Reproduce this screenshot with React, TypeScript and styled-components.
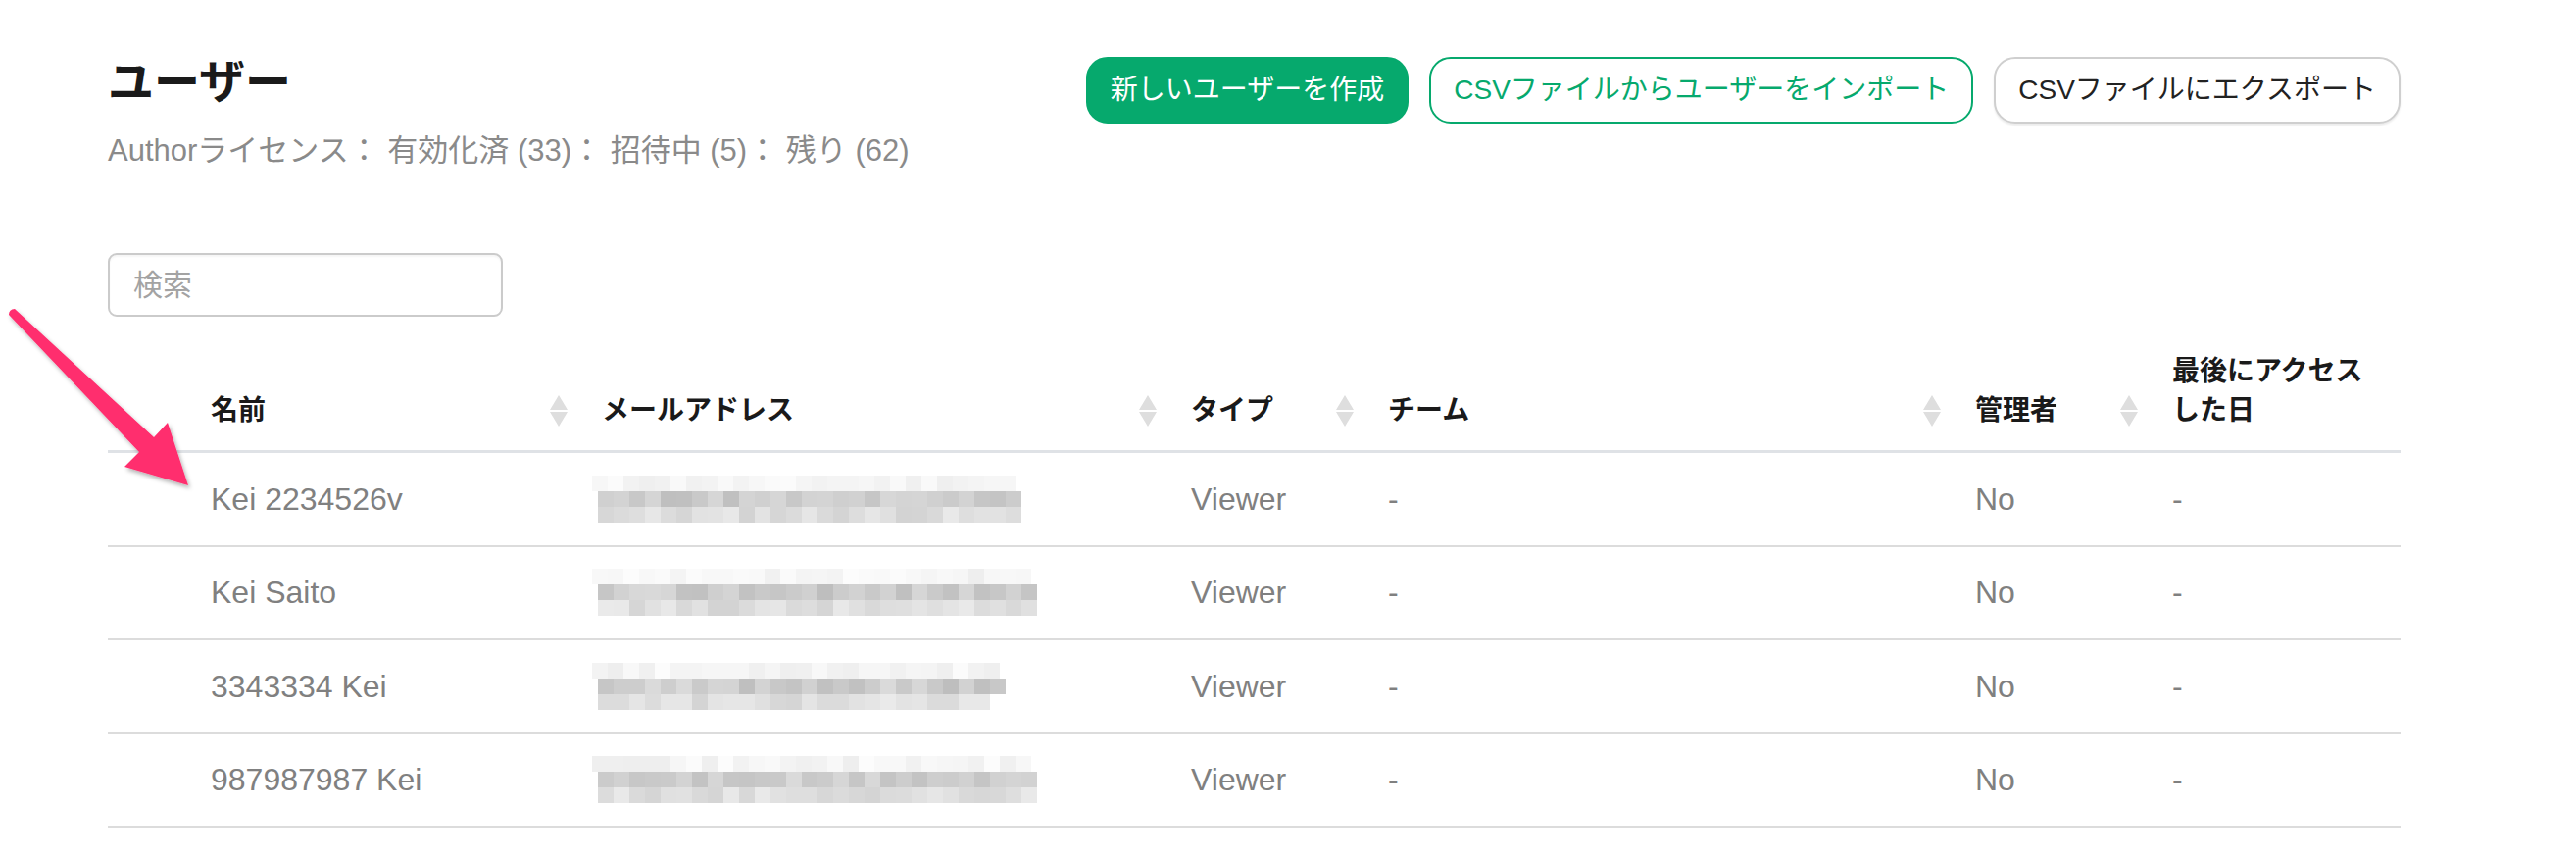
import React from "react";
import styled, { createGlobalStyle, css } from "styled-components";

const GlobalStyle = createGlobalStyle`
  html, body {
    margin: 0;
    padding: 0;
    background: #ffffff;
  }
  body {
    font-family: "Liberation Sans", "Noto Sans CJK JP", sans-serif;
    color: #1a1a1a;
  }
  * {
    box-sizing: border-box;
  }
`;

const GREEN = "#06a96d";
const COLUMNS = "81px 399px 601px 201px 599px 201px 257px";

const Page = styled.div`
  position: relative;
  width: 2628px;
  padding: 56px 179px 0 110px;
`;

const TopBar = styled.header`
  display: flex;
  justify-content: space-between;
  align-items: flex-start;
`;

const TitleBlock = styled.div`
  display: flex;
  flex-direction: column;
  gap: 22px;
`;

const Title = styled.h1`
  margin: 0;
  font-size: 47px;
  line-height: 56px;
  font-weight: 700;
  color: #1a1a1a;
`;

const LicenseInfo = styled.p`
  margin: 0;
  font-size: 31px;
  line-height: 40px;
  color: #8a8a8a;
  white-space: pre;
`;

const Actions = styled.div`
  display: flex;
  gap: 21px;
  margin-top: 2px;
`;

const ActionButton = styled.button<{ $variant: "primary" | "outline" | "plain" }>`
  height: 68px;
  padding: 0 23px;
  border-radius: 22px;
  border: 2px solid transparent;
  font-family: inherit;
  font-size: 28px;
  line-height: 1;
  white-space: nowrap;
  cursor: pointer;
  ${({ $variant }) =>
    $variant === "primary"
      ? css`
          background: ${GREEN};
          border-color: ${GREEN};
          color: #ffffff;
        `
      : $variant === "outline"
      ? css`
          background: #ffffff;
          border-color: ${GREEN};
          color: ${GREEN};
        `
      : css`
          background: #ffffff;
          border-color: #cfcfcf;
          color: #222222;
          box-shadow: 0 2px 2px rgba(0, 0, 0, 0.08);
        `}
`;

const SearchInput = styled.input`
  display: block;
  margin-top: 84px;
  width: 403px;
  height: 65px;
  padding: 0 24px;
  border: 2px solid #cbcbcb;
  border-radius: 9px;
  font-family: inherit;
  font-size: 30px;
  color: #333;
  outline: none;
  box-shadow: inset 0 2px 2px rgba(0, 0, 0, 0.04);
  &::placeholder {
    color: #a3a3a3;
  }
`;

const UserTable = styled.div`
  margin-top: 20px;
  width: 2339px;
`;

const HeaderRow = styled.div`
  display: grid;
  grid-template-columns: ${COLUMNS};
  border-bottom: 3px solid #dfe2e6;
`;

const HeaderCell = styled.div`
  display: flex;
  justify-content: space-between;
  align-items: flex-end;
  padding: 16px 11px 20px 24px;
  font-size: 28px;
  line-height: 40px;
  font-weight: 700;
  color: #1a1a1a;
`;

const SortMark = styled.svg`
  flex: none;
  margin-bottom: 4px;
`;

const DataRow = styled.div`
  display: grid;
  grid-template-columns: ${COLUMNS};
  height: 95.5px;
  align-items: center;
  border-bottom: 2px solid #dcdcdc;
`;

const DataCell = styled.div`
  padding: 0 24px;
  font-size: 32px;
  line-height: 40px;
  color: #808080;
  white-space: nowrap;
`;

const Mosaic = styled.svg`
  display: block;
  margin-left: -10px;
`;

const ArrowMark = styled.svg`
  position: absolute;
  left: 0;
  top: 300px;
  overflow: visible;
  pointer-events: none;
`;

const SortIcon = () => (
  <SortMark width="18" height="32" viewBox="0 0 18 32">
    <path d="M9 0 L18 15 L0 15 Z" fill="#dedede" />
    <path d="M0 17 L18 17 L9 32 Z" fill="#dedede" />
  </SortMark>
);

function seeded(seed: number) {
  let s = seed;
  return () => {
    s = (s * 9301 + 49297) % 233280;
    return s / 233280;
  };
}

const BlurredEmail = ({ seed, widths }: { seed: number; widths: [number, number, number] }) => {
  const rnd = seeded(seed);
  const cell = 16;
  const ranges: [number, number][] = [
    [238, 252],
    [190, 218],
    [210, 234],
  ];
  const cells: React.ReactElement[] = [];
  widths.forEach((count, row) => {
    const [lo, hi] = ranges[row];
    for (let i = 0; i < count; i++) {
      const v = Math.round(lo + rnd() * (hi - lo));
      const x = (row === 0 ? 0 : 6) + i * cell;
      cells.push(
        <rect key={`${row}-${i}`} x={x} y={row * cell} width={cell} height={cell} fill={`rgb(${v},${v},${v})`} />
      );
    }
  });
  return (
    <Mosaic width="460" height="48" viewBox="0 0 460 48">
      {cells}
    </Mosaic>
  );
};

const headers = ["名前", "メールアドレス", "タイプ", "チーム", "管理者"];

const users: { name: string; seed: number; widths: [number, number, number] }[] = [
  { name: "Kei 2234526v", seed: 11, widths: [27, 27, 27] },
  { name: "Kei Saito", seed: 37, widths: [28, 28, 28] },
  { name: "3343334 Kei", seed: 53, widths: [26, 26, 25] },
  { name: "987987987 Kei", seed: 71, widths: [28, 28, 28] },
];

export default function App() {
  return (
    <>
      <GlobalStyle />
      <Page>
        <TopBar>
          <TitleBlock>
            <Title>ユーザー</Title>
            <LicenseInfo>Authorライセンス： 有効化済 (33)： 招待中 (5)： 残り (62)</LicenseInfo>
          </TitleBlock>
          <Actions>
            <ActionButton $variant="primary">新しいユーザーを作成</ActionButton>
            <ActionButton $variant="outline">CSVファイルからユーザーをインポート</ActionButton>
            <ActionButton $variant="plain">CSVファイルにエクスポート</ActionButton>
          </Actions>
        </TopBar>

        <SearchInput placeholder="検索" />

        <UserTable>
          <HeaderRow>
            <HeaderCell />
            {headers.map((h) => (
              <HeaderCell key={h}>
                <span>{h}</span>
                <SortIcon />
              </HeaderCell>
            ))}
            <HeaderCell>
              <span>
                最後にアクセス
                <br />
                した日
              </span>
            </HeaderCell>
          </HeaderRow>
          {users.map((u) => (
            <DataRow key={u.name}>
              <DataCell />
              <DataCell>{u.name}</DataCell>
              <DataCell>
                <BlurredEmail seed={u.seed} widths={u.widths} />
              </DataCell>
              <DataCell>Viewer</DataCell>
              <DataCell>-</DataCell>
              <DataCell>No</DataCell>
              <DataCell>-</DataCell>
            </DataRow>
          ))}
        </UserTable>

        <ArrowMark width="220" height="220" viewBox="0 300 220 220">
          <defs>
            <filter id="arrowShadow" x="-20%" y="-20%" width="140%" height="140%">
              <feDropShadow dx="2" dy="3" stdDeviation="2" floodColor="#000" floodOpacity="0.3" />
            </filter>
          </defs>
          <path
            d="M9 321 Q9 315.5 15 315 L157 446 L171 431 L192 495 L127 476 L142 461 Z"
            fill="#ff2d6e"
            filter="url(#arrowShadow)"
          />
        </ArrowMark>
      </Page>
    </>
  );
}
